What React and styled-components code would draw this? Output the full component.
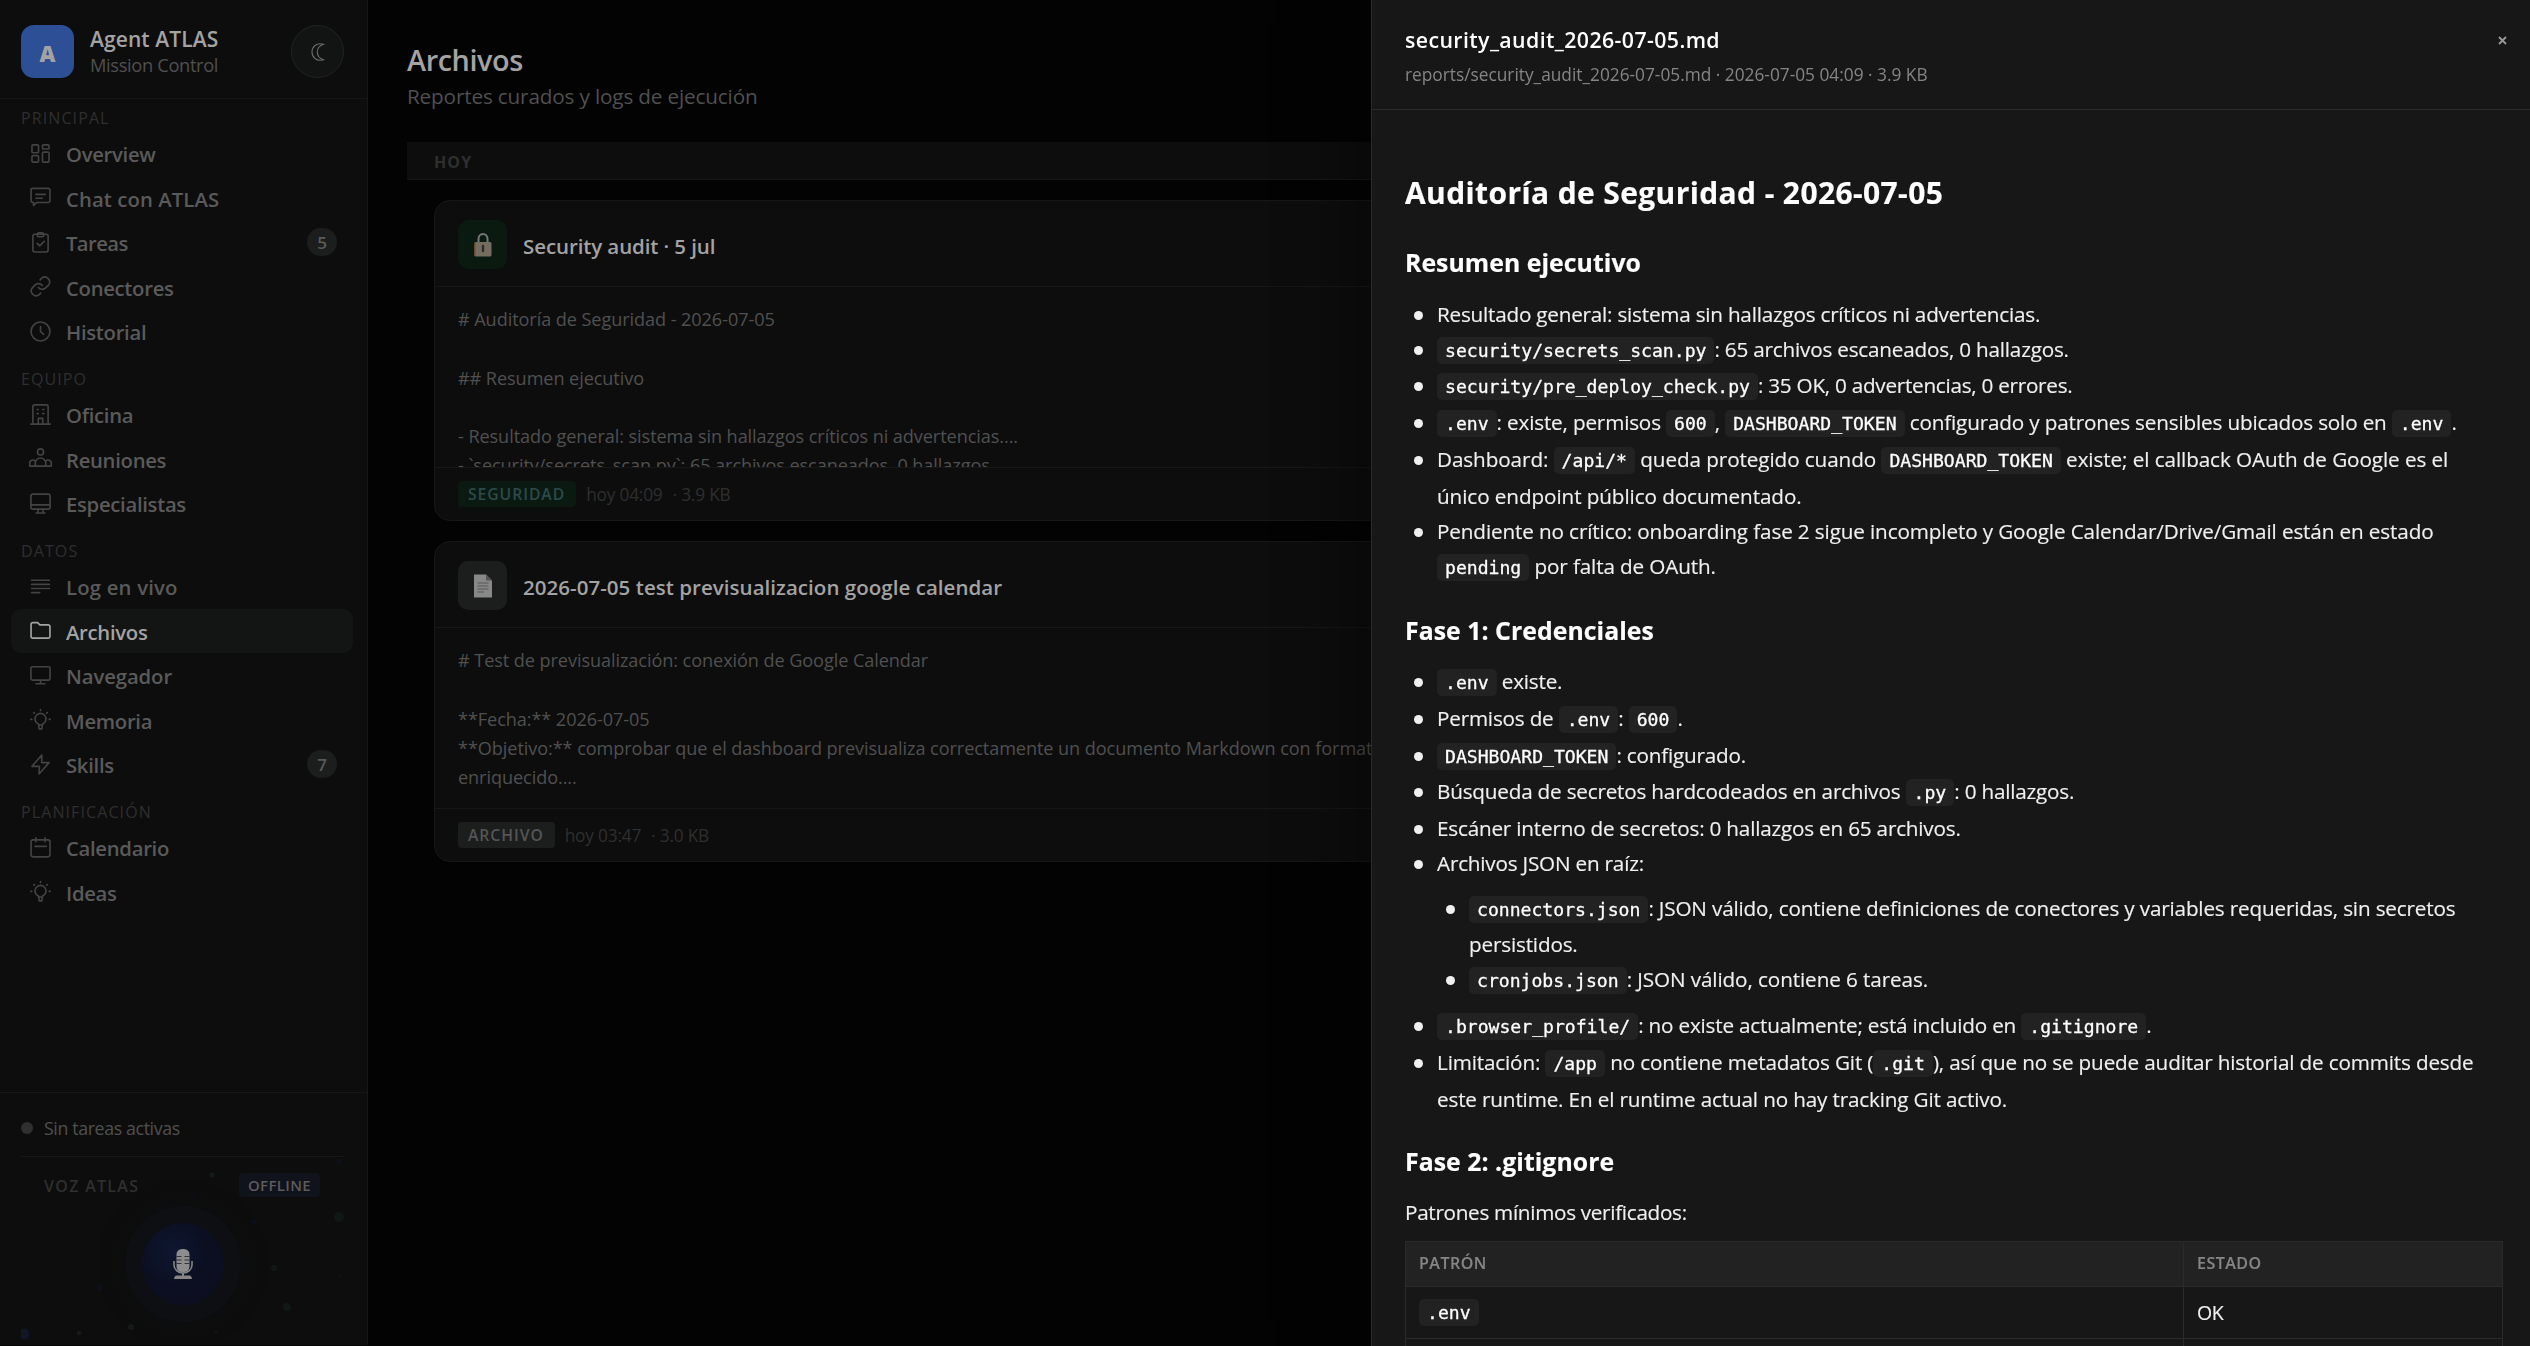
import React from "react";
import styled, { createGlobalStyle, css } from "styled-components";

const icons = {
  overview: (
    <>
      <rect x="1.5" y="1.4" width="5" height="6" rx="0.8" />
      <rect x="9.5" y="1.4" width="5" height="3.2" rx="0.8" />
      <rect x="1.5" y="9.6" width="5" height="5" rx="0.8" />
      <rect x="9.5" y="6.9" width="5" height="7.7" rx="0.8" />
    </>
  ),
  chat: (
    <>
      <path d="M2.2 1h11.6a1.4 1.4 0 0 1 1.4 1.4v8a1.4 1.4 0 0 1-1.4 1.4H5L2.7 14v-2.2h-.5A1.4 1.4 0 0 1 .8 10.4V2.4A1.4 1.4 0 0 1 2.2 1z" />
      <path d="M4.5 5.6h7.2M4.5 8.6h4.8" />
    </>
  ),
  tasks: (
    <>
      <rect x="2.2" y="1.7" width="11.6" height="13.5" rx="1.5" />
      <rect x="5.5" y="0.7" width="5" height="2.9" rx="1.3" />
      <path d="M5.5 8.7l1.9 1.9 3.4-3.4" />
    </>
  ),
  link: (
    <>
      <path d="M6.4 8.7a3.7 3.7 0 0 0 5.5.4l2.2-2.2A3.7 3.7 0 0 0 8.9 1.7L7.7 2.9" />
      <path d="M9.4 7.2a3.7 3.7 0 0 0-5.5-.4L1.8 9a3.7 3.7 0 0 0 5.2 5.2l1.2-1.2" />
    </>
  ),
  clock: (
    <>
      <circle cx="8" cy="8" r="7.2" />
      <path d="M8 4.2V8l2.3 2.2" />
    </>
  ),
  building: (
    <>
      <path d="M2.2 15.2V1.9A1.2 1.2 0 0 1 3.4.7h9.2a1.2 1.2 0 0 1 1.2 1.2v13.3M.6 15.3h14.8" />
      <path d="M6.3 15v-4h3.4v4M5.4 4.2h.9M9.7 4.2h.9M5.4 7.3h.9M9.7 7.3h.9" />
    </>
  ),
  people: (
    <>
      <circle cx="8" cy="3" r="2.3" />
      <path d="M4 13.8v-2.2a4 4 0 0 1 8 0v2.2M-.2 13.8v-2a2.3 2.3 0 0 1 4.4-1.2M16.2 13.8v-2a2.3 2.3 0 0 0-4.4-1.2M-.2 13.8h16.4" />
    </>
  ),
  specialists: (
    <>
      <rect x="0.7" y="0.9" width="14.6" height="11.4" rx="1.5" />
      <path d="M.7 9.1h14.6M6.3 12.5l-.5 2.5M9.7 12.5l.5 2.5M4.6 15.2h6.8" />
    </>
  ),
  log: <path d="M1.2 3.2h13.6M1.2 6.4h13.6M1.2 9.5h13.6M1.2 12.7h6.2" />,
  folder: (
    <path d="M.8 3.4A1.4 1.4 0 0 1 2.2 2h3.6l1.7 1.7h6.3a1.4 1.4 0 0 1 1.4 1.4v7.3a1.4 1.4 0 0 1-1.4 1.4H2.2A1.4 1.4 0 0 1 .8 12.4z" />
  ),
  browser: (
    <>
      <rect x="0.7" y="1.3" width="14.6" height="10.2" rx="1.2" />
      <path d="M8 11.5v2.8M4.6 14.3h6.8" />
    </>
  ),
  bulb: (
    <>
      <path d="M6.5 12.2v-.7a4.2 4.2 0 1 1 3 0v.7M6.4 12.2h3.2M6.6 12.2l.4 2.9h2l.4-2.9" />
      <path d="M8 .5v.7M2.8 2.7l.5.5M13.2 2.7l-.5.5M.6 7.9h.8M14.6 7.9h.8" />
    </>
  ),
  bolt: <path d="M9 .8L1.5 9.4h5.7L6.9 15.2 14.5 6.6H8.9z" />,
  calendar: (
    <>
      <rect x="0.8" y="2.2" width="14.4" height="12.9" rx="1.5" />
      <path d="M4.5.6v3M11.5.6v3M3.8 7.1h8.6" />
    </>
  ),
};

const sections = [
  {
    title: "PRINCIPAL",
    items: [
      { icon: "overview", label: "Overview" },
      { icon: "chat", label: "Chat con ATLAS", spacing: 0.1 },
      { icon: "tasks", label: "Tareas", count: 5, spacing: -0.6 },
      { icon: "link", label: "Conectores" },
      { icon: "clock", label: "Historial" },
    ],
  },
  {
    title: "EQUIPO",
    items: [
      { icon: "building", label: "Oficina" },
      { icon: "people", label: "Reuniones" },
      { icon: "specialists", label: "Especialistas" },
    ],
  },
  {
    title: "DATOS",
    items: [
      { icon: "log", label: "Log en vivo", spacing: 0.2 },
      { icon: "folder", label: "Archivos", active: true },
      { icon: "browser", label: "Navegador", spacing: -0.1 },
      { icon: "bulb", label: "Memoria" },
      { icon: "bolt", label: "Skills", count: 7 },
    ],
  },
  {
    title: "PLANIFICACIÓN",
    items: [
      { icon: "calendar", label: "Calendario" },
      { icon: "bulb", label: "Ideas" },
    ],
  },
];

const particles = [
  [191, 18, 2.5, "#141c1a"],
  [318, 5, 3, "#0d1018"],
  [172, 38, 2, "#0d1018"],
  [318, 60, 5, "#0f1813"],
  [233, 65, 2.5, "#0d111c"],
  [253, 111, 3, "#111815"],
  [266, 150, 4, "#0f1814"],
  [79, 130, 3.5, "#0d1018"],
  [110, 170, 3, "#161a1a"],
  [58, 176, 2.3, "#171a1a"],
  [3, 177, 5.5, "#121525"],
  [195, 175, 2, "#101313"],
  [319, 119, 2, "#0d1016"],
];

function Sidebar() {
  return (
    <Aside>
      <Brand>
        <Logo>A</Logo>
        <BrandText>
          <BrandName>Agent ATLAS</BrandName>
          <BrandSub>Mission Control</BrandSub>
        </BrandText>
        <ThemeButton>
          <svg width="14" height="18" viewBox="0 0 14 18">
            <path
              d="M12.5 1.2C5-.8 1 4 1 9s4 9.8 11.5 7.8C8.5 15.5 6.3 12.5 6.3 9s2.2-6.5 6.2-7.8z"
              fill="none"
              stroke="#6a6a6a"
              strokeWidth="1.1"
            />
          </svg>
        </ThemeButton>
      </Brand>
      <Nav>
        {sections.map((section) => (
          <Section key={section.title}>
            <SectionTitle>{section.title}</SectionTitle>
            {section.items.map((item) => (
              <NavItem key={item.label} $active={item.active}>
                <NavIcon viewBox="0 0 16 16" $active={item.active}>
                  {icons[item.icon]}
                </NavIcon>
                <NavLabel $spacing={item.spacing}>{item.label}</NavLabel>
                {item.count && <Count>{item.count}</Count>}
              </NavItem>
            ))}
          </Section>
        ))}
      </Nav>
      <Footer>
        <Status>
          <StatusDot />
          Sin tareas activas
        </Status>
        <Voice>
          <Particles>
            {particles.map(([x, y, r, fill]) => (
              <circle key={`${x}-${y}`} cx={x} cy={y} r={r} fill={fill} />
            ))}
          </Particles>
          <VoiceHead>
            <VoiceTitle>VOZ ATLAS</VoiceTitle>
            <Offline>OFFLINE</Offline>
          </VoiceHead>
          <Orb>
            <svg width="20" height="30" viewBox="0 0 20 30">
              <rect x="3.5" y="0" width="13" height="23" rx="5.5" fill="#8d8d8d" />
              <path
                d="M3.5 7.5h5M11.5 7.5h5M3.5 11h5M11.5 11h5M3.5 14.5h5M11.5 14.5h5"
                stroke="#333"
                strokeWidth="1.2"
              />
              <path
                d="M1 12v4a9 8 0 0 0 18 0v-4"
                fill="none"
                stroke="#858585"
                strokeWidth="1.6"
              />
              <path d="M9 24h2v2.5h5.5q2 0 2.5 3.5H1q.5-3.5 2.5-3.5H9z" fill="#858585" />
            </svg>
          </Orb>
        </Voice>
      </Footer>
    </Aside>
  );
}

function LockIcon() {
  return (
    <svg width="18" height="24" viewBox="0 0 18 24">
      <path d="M4.5 10V6a4.5 5 0 0 1 9 0v4" fill="none" stroke="#777" strokeWidth="2" />
      <rect x="0.5" y="9" width="17" height="14.5" rx="1.5" fill="#756c60" />
      <path d="M1 9.5v13" stroke="#7a5326" strokeWidth="1.2" />
      <path d="M9 13v5" stroke="#2c2c2c" strokeWidth="2.4" strokeLinecap="round" />
    </svg>
  );
}

function FileIcon() {
  return (
    <svg width="18" height="24" viewBox="0 0 18 24">
      <path d="M0 .5h12l6 6v17H0z" fill="#888" />
      <path d="M12 .5v6h6z" fill="#555" />
      <path
        d="M3.5 9h11M3.5 12h11M3.5 15h11M3.5 18h6.5"
        stroke="#565656"
        strokeWidth="1.2"
      />
    </svg>
  );
}

function FileCard({ icon, title, lines, tag, green, time, size }) {
  return (
    <Card>
      <CardHead>
        <CardIcon $green={green}>{icon}</CardIcon>
        <CardTitle $wide={!green}>{title}</CardTitle>
      </CardHead>
      <CardBody>{lines.join("\n")}</CardBody>
      <CardFoot>
        <Tag $green={green}>{tag}</Tag>
        <span>{time}</span>
        <span>· {size}</span>
      </CardFoot>
    </Card>
  );
}

function Drawer() {
  return (
    <Panel>
      <PanelHead>
        <div>
          <PanelTitle>security_audit_2026-07-05.md</PanelTitle>
          <PanelMeta>
            reports/security_audit_2026-07-05.md · 2026-07-05 04:09 · 3.9 KB
          </PanelMeta>
        </div>
        <Close viewBox="0 0 9 9">
          <path d="M1 1l7 7M8 1L1 8" />
        </Close>
      </PanelHead>
      <Markdown>
        <h1>Auditoría de Seguridad - 2026-07-05</h1>
        <h2>Resumen ejecutivo</h2>
        <ul>
          <Item $spacing={-0.22}>
            Resultado general: sistema sin hallazgos críticos ni advertencias.
          </Item>
          <Item>
            <code>security/secrets_scan.py</code>: 65 archivos escaneados, 0 hallazgos.
          </Item>
          <Item $spacing={-0.26}>
            <code>security/pre_deploy_check.py</code>: 35 OK, 0 advertencias, 0 errores.
          </Item>
          <Item $spacing={-0.17}>
            <code>.env</code>: existe, permisos <code>600</code>, <code>DASHBOARD_TOKEN</code>{" "}
            configurado y patrones sensibles ubicados solo en <code>.env</code>.
          </Item>
          <Item $spacing={-0.09}>
            Dashboard: <code>/api/*</code> queda protegido cuando <code>DASHBOARD_TOKEN</code>{" "}
            existe; el callback OAuth de Google es el
            <br />
            único endpoint público documentado.
          </Item>
          <Item $spacing={-0.13}>
            Pendiente no crítico: onboarding fase 2 sigue incompleto y Google
            Calendar/Drive/Gmail están en estado
            <br />
            <code>pending</code> por falta de OAuth.
          </Item>
        </ul>
        <h2>Fase 1: Credenciales</h2>
        <ul>
          <Item>
            <code>.env</code> existe.
          </Item>
          <Item>
            Permisos de <code>.env</code>: <code>600</code>.
          </Item>
          <Item>
            <code>DASHBOARD_TOKEN</code>: configurado.
          </Item>
          <Item>
            Búsqueda de secretos hardcodeados en archivos <code>.py</code>: 0 hallazgos.
          </Item>
          <Item>Escáner interno de secretos: 0 hallazgos en 65 archivos.</Item>
          <Item>
            Archivos JSON en raíz:
            <ul>
              <Item $spacing={-0.17}>
                <code>connectors.json</code>: JSON válido, contiene definiciones de conectores y
                variables requeridas, sin secretos
                <br />
                persistidos.
              </Item>
              <Item $spacing={-0.1}>
                <code>cronjobs.json</code>: JSON válido, contiene 6 tareas.
              </Item>
            </ul>
          </Item>
          <Item>
            <code>.browser_profile/</code>: no existe actualmente; está incluido en{" "}
            <code>.gitignore</code>.
          </Item>
          <Item $spacing={-0.16}>
            Limitación: <code>/app</code> no contiene metadatos Git (<code>.git</code>), así que no
            se puede auditar historial de commits desde
            <br />
            este runtime. En el runtime actual no hay tracking Git activo.
          </Item>
        </ul>
        <h2>Fase 2: .gitignore</h2>
        <p>Patrones mínimos verificados:</p>
        <table>
          <thead>
            <tr>
              <th>PATRÓN</th>
              <th>ESTADO</th>
            </tr>
          </thead>
          <tbody>
            <tr>
              <td>
                <code>.env</code>
              </td>
              <td>OK</td>
            </tr>
            <tr>
              <td />
              <td />
            </tr>
          </tbody>
        </table>
      </Markdown>
    </Panel>
  );
}

function App() {
  return (
    <Shell>
      <GlobalStyle />
      <Sidebar />
      <Main>
        <PageTitle>Archivos</PageTitle>
        <PageSub>Reportes curados y logs de ejecución</PageSub>
        <DayBar>HOY</DayBar>
        <Cards>
          <FileCard
            icon={<LockIcon />}
            title="Security audit · 5 jul"
            lines={[
              "# Auditoría de Seguridad - 2026-07-05",
              "",
              "## Resumen ejecutivo",
              "",
              "- Resultado general: sistema sin hallazgos críticos ni advertencias....",
              "- `security/secrets_scan.py`: 65 archivos escaneados, 0 hallazgos.",
            ]}
            tag="SEGURIDAD"
            green
            time="hoy 04:09"
            size="3.9 KB"
          />
          <FileCard
            icon={<FileIcon />}
            title="2026-07-05 test previsualizacion google calendar"
            lines={[
              "# Test de previsualización: conexión de Google Calendar",
              "",
              "**Fecha:** 2026-07-05",
              "**Objetivo:** comprobar que el dashboard previsualiza correctamente un documento Markdown con formato",
              "enriquecido....",
            ]}
            tag="ARCHIVO"
            time="hoy 03:47"
            size="3.0 KB"
          />
        </Cards>
      </Main>
      <Drawer />
    </Shell>
  );
}

const GlobalStyle = createGlobalStyle`
  * {
    box-sizing: border-box;
  }
  body {
    margin: 0;
    background: #030303;
    font-family: "Segoe UI", "Open Sans", "Noto Sans", sans-serif;
    overflow: hidden;
  }
`;

const Shell = styled.div`
  display: flex;
  height: 1346px;
  overflow: hidden;
`;

const Aside = styled.aside`
  display: flex;
  flex-direction: column;
  flex: none;
  width: 368px;
  height: 1345px;
  background: #0d0d0d;
  border-right: 1px solid #171717;
`;
const Brand = styled.div`
  display: flex;
  align-items: center;
  height: 99px;
  padding: 25px 23px 20px 21px;
  border-bottom: 1px solid #171717;
`;
const Logo = styled.div`
  display: flex;
  align-items: center;
  justify-content: center;
  width: 53px;
  height: 53px;
  border-radius: 13px;
  background: #2c4f96;
  color: #a3a3a3;
  font-size: 22px;
  font-weight: 800;
  padding-top: 2px;
`;
const BrandText = styled.div`
  flex: 1;
  margin-left: 16px;
  padding-top: 1px;
  line-height: 26px;
  white-space: nowrap;
`;
const BrandName = styled.div`
  color: #a3a3a3;
  font-size: 21px;
  font-weight: 600;
  letter-spacing: 0.1px;
`;
const BrandSub = styled.div`
  color: #505050;
  font-size: 18.3px;
  letter-spacing: -0.35px;
`;
const ThemeButton = styled.div`
  display: flex;
  align-items: center;
  justify-content: center;
  width: 53px;
  height: 53px;
  border: 1px solid #222;
  border-radius: 50%;
  background: #111413;
`;

const Nav = styled.nav`
  flex: 1;
`;
const Section = styled.div`
  margin-bottom: 6.5px;
`;
const SectionTitle = styled.div`
  height: 32px;
  padding: 6px 0 0 21px;
  color: #2f2f2f;
  font-size: 16px;
  font-weight: 500;
  letter-spacing: 1.1px;
  line-height: 26px;
`;
const NavItem = styled.div`
  display: flex;
  align-items: center;
  height: 44.5px;
  margin: 0 14px 0 11px;
  padding: 0 16px 0 19px;
  border-radius: 10px;
  color: #5a5a5a;
  ${(props) =>
    props.$active &&
    css`
      background: #121514;
      color: #a3a3a3;
    `}
`;
const NavIcon = styled.svg`
  width: 21px;
  height: 21px;
  overflow: visible;
  fill: none;
  stroke: ${(props) => (props.$active ? "#a3a3a3" : "#434343")};
  stroke-width: 1.25;
  stroke-linecap: round;
  stroke-linejoin: round;
`;
const NavLabel = styled.span`
  flex: 1;
  margin-left: 15px;
  padding-top: 2px;
  font-size: 20.3px;
  font-weight: 600;
  letter-spacing: ${(props) => props.$spacing ?? -0.3}px;
`;
const Count = styled.span`
  width: 30px;
  height: 28px;
  border-radius: 14px;
  background: #1b1e1d;
  color: #5a5a5a;
  font-size: 17px;
  font-weight: 600;
  line-height: 29px;
  text-align: center;
`;

const Footer = styled.div`
  height: 253px;
  padding: 0 23px 0 21px;
  border-top: 1px solid #171717;
`;
const Status = styled.div`
  display: flex;
  align-items: center;
  height: 64px;
  padding-top: 7px;
  border-bottom: 1px solid #171717;
  color: #505050;
  font-size: 17.8px;
  letter-spacing: -0.38px;
`;
const StatusDot = styled.span`
  width: 12px;
  height: 12px;
  margin-right: 11px;
  border-radius: 50%;
  background: #303030;
`;
const Voice = styled.div`
  position: relative;
  height: 182px;
  overflow: hidden;
`;
const Particles = styled.svg`
  position: absolute;
  left: 0;
  top: 0;
  width: 100%;
  height: 100%;
`;
const VoiceHead = styled.div`
  display: flex;
  align-items: center;
  justify-content: space-between;
  height: 24px;
  margin: 16px 24px 0 23px;
`;
const VoiceTitle = styled.span`
  color: #2f2f2f;
  font-size: 16px;
  font-weight: 600;
  letter-spacing: 1.3px;
  padding-top: 1px;
`;
const Offline = styled.span`
  width: 81px;
  border-radius: 4px;
  background: #10121c;
  color: #5c5c5a;
  font-size: 15px;
  font-weight: 600;
  letter-spacing: 0.35px;
  line-height: 24px;
  text-align: center;
`;
const Orb = styled.div`
  display: flex;
  align-items: center;
  justify-content: center;
  position: relative;
  width: 82px;
  height: 82px;
  margin: 26px auto 0;
  border-radius: 50%;
  background: radial-gradient(circle at 38% 35%, #0d1730, #0c0f22 45%, #0c0e1e);
  box-shadow: 0 0 0 17px #0d0f13, 0 0 20px 20px #0d0e10;
`;

const Main = styled.main`
  flex: 1;
  padding: 43px 39px 0;
  overflow: hidden;
`;
const PageTitle = styled.h1`
  margin: 0;
  color: #a3a3a3;
  font-size: 28.8px;
  font-weight: 600;
  letter-spacing: -0.4px;
  line-height: 34px;
`;
const PageSub = styled.div`
  color: #505050;
  font-size: 20.7px;
  letter-spacing: -0.15px;
  line-height: 38px;
`;
const DayBar = styled.div`
  height: 38px;
  margin-top: 27px;
  padding: 0 27px;
  border-bottom: 1px solid #171717;
  background: #0d0d0d;
  color: #2f2f2f;
  font-size: 16px;
  font-weight: 700;
  letter-spacing: 1.1px;
  line-height: 40px;
`;
const Cards = styled.div`
  display: flex;
  flex-direction: column;
  gap: 20px;
  padding: 20px 27px;
`;
const Card = styled.article`
  border: 1px solid #171717;
  border-radius: 16px;
  background: #0d0d0d;
  overflow: hidden;
`;
const CardHead = styled.div`
  display: flex;
  align-items: center;
  height: 86px;
  padding: 4px 23px 0;
  border-bottom: 1px solid #171717;
`;
const CardIcon = styled.div`
  display: flex;
  align-items: center;
  justify-content: center;
  width: 49px;
  height: 49px;
  margin-right: 16px;
  margin-bottom: 3px;
  padding-top: 2px;
  border-radius: 10px;
  background: ${(props) => (props.$green ? "#0a1a10" : "#1b1e1d")};
`;
const CardTitle = styled.div`
  color: #a3a3a3;
  font-size: 20.5px;
  font-weight: 600;
  letter-spacing: ${(props) => (props.$wide ? "0.04px" : "-0.1px")};
`;
const CardBody = styled.div`
  height: 180px;
  padding: 18px 23px 0;
  overflow: hidden;
  color: #505050;
  font-size: 18.1px;
  letter-spacing: -0.07px;
  line-height: 29.3px;
  white-space: pre;
`;
const CardFoot = styled.div`
  display: flex;
  align-items: center;
  gap: 10px;
  height: 53px;
  padding: 0 23px;
  border-top: 1px solid #171717;
  color: #2f2f2f;
  font-size: 17.3px;
  letter-spacing: -0.2px;
`;
const Tag = styled.span`
  padding: 0 11px 0 10px;
  border-radius: 4px;
  background: ${(props) => (props.$green ? "#0a1a10" : "#1b1e1d")};
  color: ${(props) => (props.$green ? "#2c4a4c" : "#555")};
  font-size: 15.7px;
  font-weight: 600;
  letter-spacing: 0.95px;
  line-height: 26px;
`;

const Panel = styled.section`
  position: fixed;
  top: 0;
  right: 0;
  bottom: 0;
  width: 1159px;
  border-left: 1px solid #2a2a2a;
  background: #171717;
  color: #f0f0f0;
  box-shadow: -16px 0 70px rgba(0, 0, 0, 0.45);
  overflow: hidden;
`;
const PanelHead = styled.header`
  display: flex;
  justify-content: space-between;
  height: 110px;
  padding: 24px 23px 0 33px;
  border-bottom: 1px solid #2a2a2a;
`;
const PanelTitle = styled.div`
  color: #fff;
  font-size: 21.3px;
  font-weight: 600;
  letter-spacing: 0.4px;
  line-height: 31px;
`;
const PanelMeta = styled.div`
  margin-top: 6px;
  color: #858585;
  font-size: 17.3px;
  line-height: 28px;
`;
const Close = styled.svg`
  width: 9px;
  height: 9px;
  margin-top: 12px;
  fill: none;
  stroke: #999;
  stroke-width: 1.8;
`;
const Item = styled.li`
  letter-spacing: ${(props) => props.$spacing ?? -0.2}px;
`;
const Markdown = styled.div`
  padding: 64px 28px 0 33px;
  font-size: 20.7px;
  letter-spacing: -0.3px;
  line-height: 35.15px;
  white-space: nowrap;
  -webkit-text-stroke: 0.15px;

  h1 {
    margin: 0 0 34px;
    color: #fff;
    font-size: 30px;
    font-weight: 700;
    letter-spacing: 0.38px;
    line-height: 38px;
  }
  h2 {
    margin: 28px 0 18.5px;
    color: #fff;
    font-size: 24.8px;
    font-weight: 700;
    letter-spacing: 0.05px;
    line-height: 32px;
  }
  ul {
    margin: 0;
    padding-left: 32px;
    list-style: none;
  }
  ul ul {
    margin: 9px 0;
  }
  li::before {
    content: "";
    display: inline-block;
    width: 9px;
    height: 9px;
    margin: 0 14px 0 -23px;
    border-radius: 50%;
    background: #f0f0f0;
    vertical-align: 2px;
  }
  p {
    margin: 0 0 10.5px;
  }
  code {
    padding: 3px 8px;
    border-radius: 5px;
    background: #222;
    color: #fff;
    font-family: "Consolas", "DejaVu Sans Mono", monospace;
    font-size: 18.1px;
    letter-spacing: 0;
    line-height: 35.75px;
    -webkit-text-stroke: 0.3px #fff;
  }
  table {
    width: 1098px;
    border-collapse: collapse;
    table-layout: fixed;
  }
  th,
  td {
    padding: 0 13px;
    border: 1px solid #2a2a2a;
    text-align: left;
  }
  th {
    height: 45px;
    background: #222;
    color: #858585;
    font-size: 16px;
    font-weight: 600;
    letter-spacing: 0.5px;
  }
  th:first-child {
    width: 778px;
  }
  td {
    height: 52px;
    font-size: 19.5px;
  }
`;

export default App;
